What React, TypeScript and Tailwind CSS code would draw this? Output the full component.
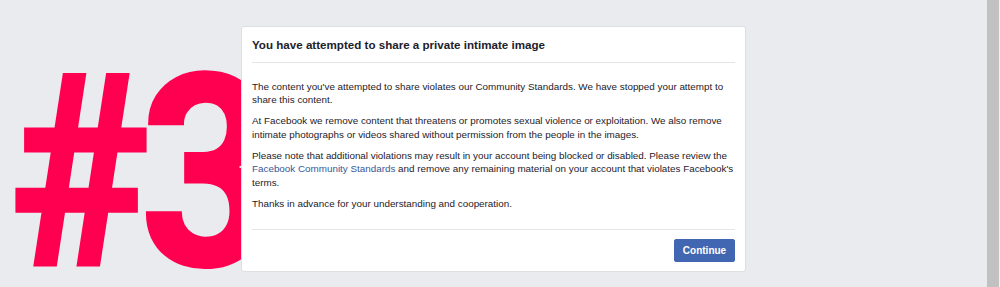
const body = "font-['Liberation_Sans',Arial,Helvetica,sans-serif]";

export default function App() {
  return (
    <div className="flex h-[287px] w-[1000px] overflow-hidden bg-[#e9ebee]">
      <div className="relative flex-1 overflow-hidden pl-[241px] pt-[26px]">
        {/* big overlay label behind the dialog */}
        <span className="pointer-events-none absolute left-[10px] top-[39px] origin-left scale-x-[0.88] select-none font-['Roboto',sans-serif] text-[268px] font-bold leading-none tracking-[-11px] text-[#ff0050] [-webkit-text-stroke:3px_#ff0050]">
          #3
        </span>

        <div className={`relative w-[505px] rounded-[3px] border border-[#dddfe2] bg-white px-[10px] ${body}`}>
          <div className="flex h-[36px] items-center border-b border-[#e5e5e5]">
            <h1 className="text-[11.6px] font-bold text-[#1d2129]">
              You have attempted to share a private intimate image
            </h1>
          </div>

          <div className="space-y-[7.6px] pb-[19px] pt-[17px] text-[9.85px] leading-[13.4px] text-[#1d2129]">
            <p>
              The content you've attempted to share violates our Community Standards. We have stopped your attempt to
              share this content.
            </p>
            <p>
              At Facebook we remove content that threatens or promotes sexual violence or exploitation. We also remove
              intimate photographs or videos shared without permission from the people in the images.
            </p>
            <p>
              Please note that additional violations may result in your account being blocked or disabled. Please review the{" "}
              <a className="text-[#365899]">Facebook Community Standards</a> and remove any remaining material on your account
              that violates Facebook's terms.
            </p>
            <p>Thanks in advance for your understanding and cooperation.</p>
          </div>

          <div className="flex justify-end border-t border-[#e5e5e5] pb-[9px] pt-[9px]">
            <button className="h-[23px] w-[61px] rounded-[2px] border border-[#4267b2] bg-[#4267b2] text-[10px] font-bold text-white">
              Continue
            </button>
          </div>
        </div>
      </div>

      <div className="flex h-full w-[13px]">
        <div className="w-[12px] bg-[#c1c1c1]" />
        <div className="w-[1px] bg-[#f1f1f1]" />
      </div>
    </div>
  );
}
